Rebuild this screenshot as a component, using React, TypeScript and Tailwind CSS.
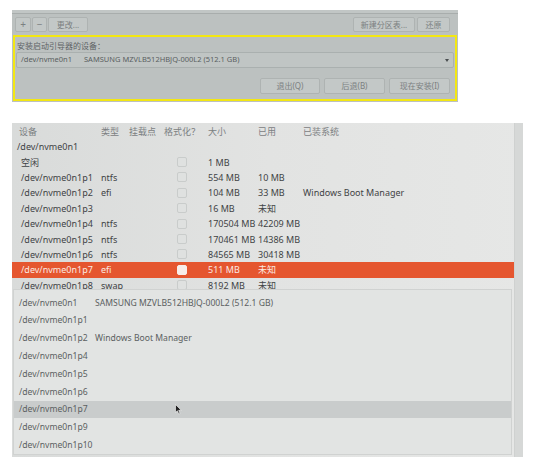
import React from 'react';

const font = { fontFamily: '"Noto Sans", "Noto Sans CJK SC", sans-serif' };

const rows = [
  { dev: '/dev/nvme0n1', disk: true },
  { dev: '空闲', size: '1 MB', box: true },
  { dev: '/dev/nvme0n1p1', type: 'ntfs', size: '554 MB', used: '10 MB', box: true },
  { dev: '/dev/nvme0n1p2', type: 'efi', size: '104 MB', used: '33 MB', os: 'Windows Boot Manager', box: true },
  { dev: '/dev/nvme0n1p3', size: '16 MB', used: '未知', box: true },
  { dev: '/dev/nvme0n1p4', type: 'ntfs', size: '170504 MB', used: '42209 MB', box: true },
  { dev: '/dev/nvme0n1p5', type: 'ntfs', size: '170461 MB', used: '14386 MB', box: true },
  { dev: '/dev/nvme0n1p6', type: 'ntfs', size: '84565 MB', used: '30418 MB', box: true },
  { dev: '/dev/nvme0n1p7', type: 'efi', size: '511 MB', used: '未知', box: true, active: true },
  { dev: '/dev/nvme0n1p8', type: 'swap', size: '8192 MB', used: '未知', box: true },
];

const menu = [
  { dev: '/dev/nvme0n1', label: 'SAMSUNG MZVLB512HBJQ-000L2 (512.1 GB)' },
  { dev: '/dev/nvme0n1p1' },
  { dev: '/dev/nvme0n1p2', label: 'Windows Boot Manager' },
  { dev: '/dev/nvme0n1p4' },
  { dev: '/dev/nvme0n1p5' },
  { dev: '/dev/nvme0n1p6' },
  { dev: '/dev/nvme0n1p7', hover: true },
  { dev: '/dev/nvme0n1p9' },
  { dev: '/dev/nvme0n1p10' },
];

const Btn: React.FC<{ w: string; size?: string; children: React.ReactNode }> = ({ w, size = 'text-[8px]', children }) => (
  <div className={`${w} ${size} h-full flex items-center justify-center rounded-[2px] border border-[#aeb3b2] bg-[#c3c8c7] text-[#7b8081]`}>
    {children}
  </div>
);

export default function App() {
  return (
    <div className="w-[534px] h-[467px] bg-white overflow-hidden flex flex-col" style={font}>
      {/* installer screenshot */}
      <div className="ml-[12px] mt-[10px] w-[446px] h-[92px] bg-[#bcc1c0] flex flex-col">
        <div className="h-[4px] border-b border-[#a8adac] bg-[#c1c6c5]" />
        <div className="mt-[3px] h-[15px] flex items-center px-[3px]">
          <div className="flex h-full gap-[1px]">
            <Btn w="w-[16px]" size="text-[10px]">+</Btn>
            <Btn w="w-[15px]" size="text-[10px]">−</Btn>
            <Btn w="w-[40px]">更改...</Btn>
          </div>
          <div className="flex-1" />
          <div className="flex h-full gap-[2px] mr-[5px]">
            <Btn w="w-[62px]">新建分区表...</Btn>
            <Btn w="w-[33px]">还原</Btn>
          </div>
        </div>
        <div className="mt-[3px] mx-[1px] h-[66px] border-2 border-[#f3e712] flex flex-col">
          <div className="h-[13px] pl-[2px] flex items-end text-[8px] text-[#5f6466] leading-none">安装启动引导器的设备：</div>
          <div className="mt-[2px] mx-[1px] h-[16px] rounded-[2px] border border-[#aab0af] bg-[#c0c5c4] flex items-center pl-[4px] pr-[4px] text-[7.5px] text-[#5a5f61]">
            <span className="w-[63px]">/dev/nvme0n1</span>
            <span>SAMSUNG MZVLB512HBJQ-000L2 (512.1 GB)</span>
            <span className="ml-auto w-0 h-0 border-l-[2.5px] border-r-[2.5px] border-t-[3px] border-l-transparent border-r-transparent border-t-[#4a4e50]" />
          </div>
          <div className="mt-[10px] h-[16px] flex justify-end gap-[4px] pr-[5px]">
            <Btn w="w-[60px]">退出(Q)</Btn>
            <Btn w="w-[61px]">后退(B)</Btn>
            <Btn w="w-[61px]">现在安装(I)</Btn>
          </div>
        </div>
      </div>

      {/* partition table screenshot */}
      <div className="relative ml-[12px] mt-[21px] w-[511px] h-[334px] bg-gradient-to-r from-[#d9dbda] via-[#e2e3e2] to-[#e6e7e6] flex text-[9px] leading-none">
        <div className="flex-1 flex flex-col pt-[1px]">
          <div className="h-[15px] flex items-center text-[#7c8082]">
            <span className="pl-[7px] w-[89px]">设备</span>
            <span className="w-[28px]">类型</span>
            <span className="w-[35px]">挂载点</span>
            <span className="w-[44px]">格式化？</span>
            <span className="w-[50px]">大小</span>
            <span className="w-[45px]">已用</span>
            <span>已装系统</span>
          </div>
          {rows.map((r) => (
            <div
              key={r.dev}
              className={`h-[15.4px] flex items-center ${r.active ? 'bg-[#e5562f] text-[#fbe9e2] mr-[-2px]' : 'text-[#3f4345]'}`}
            >
              <span className={`${r.disk ? 'pl-[5px]' : 'pl-[9px]'} w-[89px] shrink-0`}>{r.dev}</span>
              <span className="w-[63px] shrink-0">{r.type}</span>
              <span className="w-[44px] shrink-0 flex pl-[13px]">
                {r.box && (
                  <span
                    className={`w-[10px] h-[10px] rounded-[2px] border ${r.active ? 'bg-[#f7ede9] border-[#f7ede9]' : 'border-[#c9cccb] bg-[#dfe1e0]'}`}
                  />
                )}
              </span>
              <span className="w-[50px] shrink-0">{r.size}</span>
              <span className="w-[45px] shrink-0">{r.used}</span>
              <span>{r.os}</span>
            </div>
          ))}
        </div>
        <div className="w-[9px] bg-[#d6d8d7] border-l border-[#cfd1d0]" />

        {/* dropdown list over the table */}
        <div className="absolute left-[1px] top-[166px] w-[499px] h-[166px] bg-[#e2e4e3] border border-[#d0d2d1] pt-[4px] flex flex-col text-[8.6px] text-[#5b5f61]">
          {menu.map((m) => (
            <div key={m.dev} className={`h-[17.8px] flex items-center pl-[5px] ${m.hover ? 'bg-[#c9cccc]' : ''}`}>
              <span className="w-[76px] shrink-0">{m.dev}</span>
              <span>{m.label}</span>
            </div>
          ))}
          <svg className="absolute left-[161px] top-[114px]" width="7" height="11" viewBox="0 0 7 11">
            <path d="M0.5 0.5 L0.5 8.5 L2.4 6.8 L3.8 10 L5 9.4 L3.7 6.3 L6.3 6.3 Z" fill="#222" stroke="#fff" strokeWidth="0.6" />
          </svg>
        </div>
      </div>
    </div>
  );
}
